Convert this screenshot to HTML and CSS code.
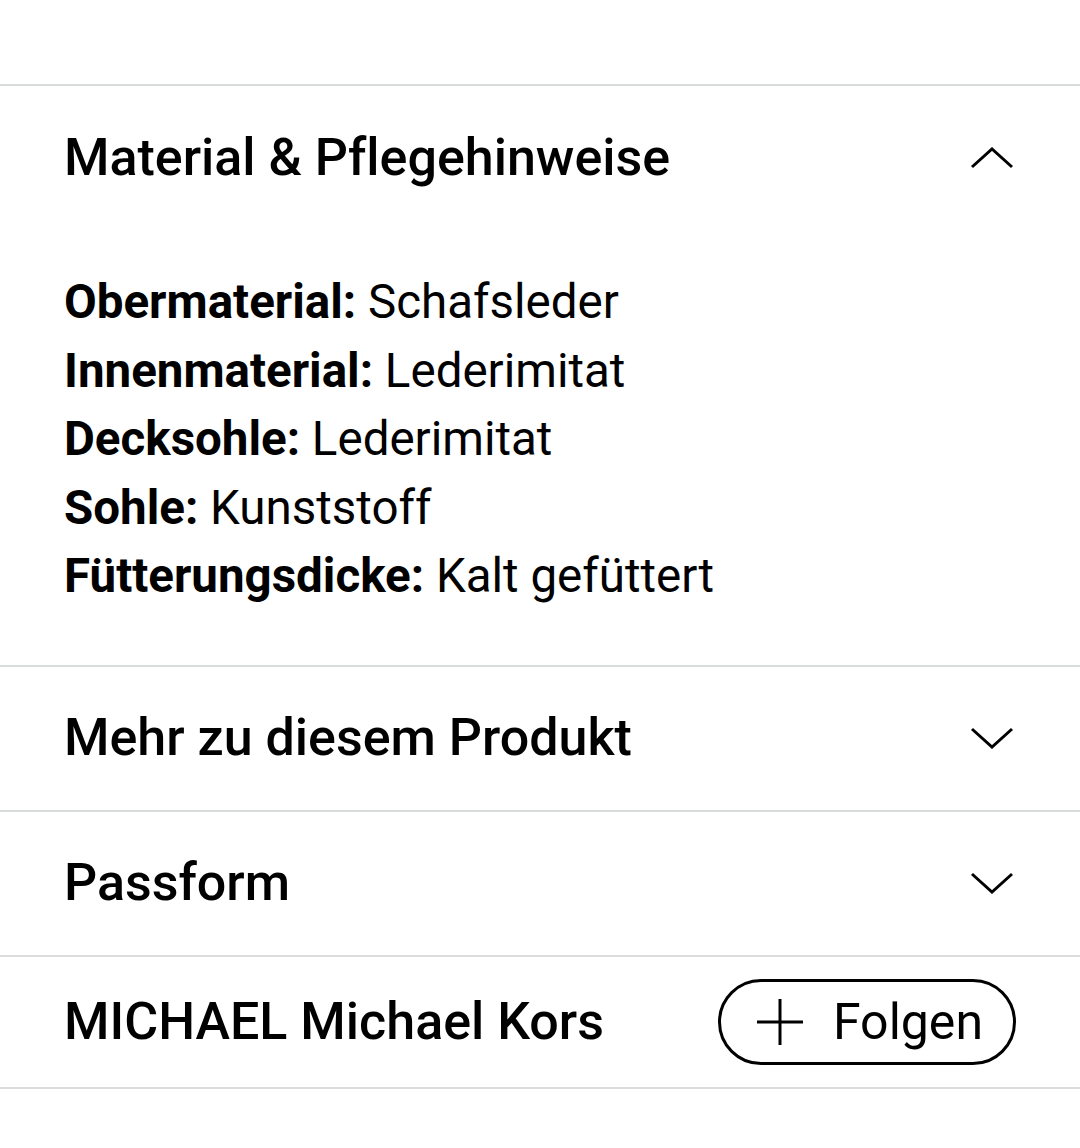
FILE: index.html
```html
<!DOCTYPE html>
<html lang="de">
<head>
<meta charset="utf-8">
<title>Produktdetails</title>
<link rel="stylesheet" href="styles.css">
</head>
<body>
<div class="page">
  <div class="top-space"></div>
  <section class="acc open">
    <div class="acc-head">
      <h2 class="acc-title">Material &amp; Pflegehinweise</h2>
      <svg class="chev" viewBox="0 0 44 22" width="44" height="22"><path d="M2 20 L22 2 L42 20" fill="none" stroke="#000" stroke-width="3" stroke-linejoin="miter"/></svg>
    </div>
    <dl class="acc-body">
      <div class="attr"><dt>Obermaterial:</dt> <dd>Schafsleder</dd></div>
      <div class="attr"><dt>Innenmaterial:</dt> <dd>Lederimitat</dd></div>
      <div class="attr"><dt>Decksohle:</dt> <dd>Lederimitat</dd></div>
      <div class="attr"><dt>Sohle:</dt> <dd>Kunststoff</dd></div>
      <div class="attr"><dt>Fütterungsdicke:</dt> <dd>Kalt gefüttert</dd></div>
    </dl>
  </section>
  <section class="acc">
    <div class="acc-head">
      <h2 class="acc-title">Mehr zu diesem Produkt</h2>
      <svg class="chev" viewBox="0 0 44 22" width="44" height="22"><path d="M2 2 L22 20 L42 2" fill="none" stroke="#000" stroke-width="3"/></svg>
    </div>
  </section>
  <section class="acc">
    <div class="acc-head">
      <h2 class="acc-title">Passform</h2>
      <svg class="chev" viewBox="0 0 44 22" width="44" height="22"><path d="M2 2 L22 20 L42 2" fill="none" stroke="#000" stroke-width="3"/></svg>
    </div>
  </section>
  <section class="brand">
    <h2 class="acc-title">MICHAEL Michael Kors</h2>
    <button class="follow" type="button">
      <svg class="plus" viewBox="0 0 46 46" width="46" height="46"><path d="M23 0 V46 M0 23 H46" fill="none" stroke="#000" stroke-width="3"/></svg>
      <span>Folgen</span>
    </button>
  </section>
</div>
</body>
</html>
```

FILE: styles.css
```css
html, body {
  margin: 0;
  padding: 0;
  background: #fff;
}
body {
  font-family: Roboto, "Liberation Sans", Arial, sans-serif;
  font-variant-ligatures: none;
  color: #000;
}
.page {
  width: 1080px;
}
.top-space {
  height: 84px;
}
.acc {
  border-top: 2px solid #d8dcdc;
}
.acc-head {
  height: 143px;
  display: flex;
  align-items: center;
  justify-content: space-between;
  padding: 0 66px 0 64px;
}
.acc-title {
  margin: 0;
  font-size: 52px;
  font-weight: 500;
  letter-spacing: 0;
  line-height: 1;
}
.chev {
  display: block;
  width: 44px;
  height: 22px;
}
.acc-body {
  margin: 0;
  padding: 39px 64px 54px;
}
.attr {
  font-size: 47.5px;
  line-height: 68.5px;
  white-space: nowrap;
}
.attr dt, .attr dd {
  display: inline;
  margin: 0;
}
.attr dt {
  font-weight: 700;
}
.attr dd {
  font-weight: 400;
}
.brand {
  border-top: 2px solid #dcdcdc;
  border-bottom: 2px solid #d8dcdc;
  height: 130px;
  display: flex;
  align-items: center;
  justify-content: space-between;
  padding: 0 64px 0 64px;
}
.follow {
  display: flex;
  align-items: center;
  gap: 30px;
  height: 86px;
  width: 298px;
  box-sizing: border-box;
  padding: 0 0 0 36px;
  border: 3px solid #000;
  border-radius: 43px;
  background: #fff;
  font-family: Roboto, "Liberation Sans", Arial, sans-serif;
  font-variant-ligatures: none;
  font-size: 50px;
  font-weight: 400;
  color: #000;
}
.plus {
  display: block;
  flex: none;
}
```
